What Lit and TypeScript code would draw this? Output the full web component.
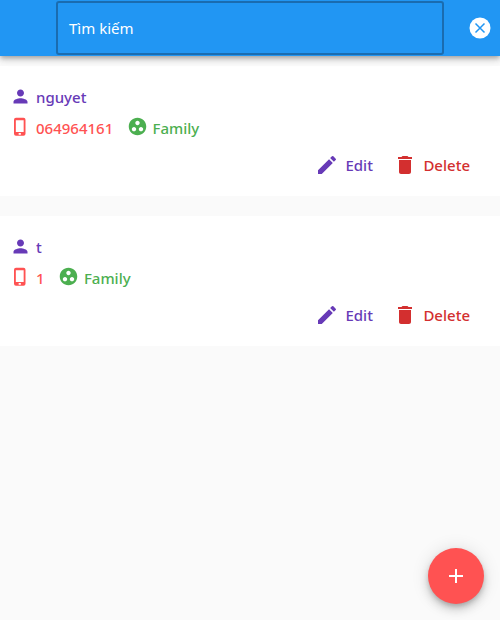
import { LitElement, html, css, svg } from "lit";
import { customElement, property } from "lit/decorators.js";

const ICONS: Record<string, string> = {
  person: "M12 12c2.21 0 4-1.79 4-4s-1.79-4-4-4-4 1.79-4 4 1.79 4 4 4zm0 2c-2.67 0-8 1.34-8 4v2h16v-2c0-2.66-5.33-4-8-4z",
  phone: "M16.2 1H7.2A2.4 2.4 0 0 0 4.8 3.4v16.8A2.4 2.4 0 0 0 7.2 22.6h9A2.4 2.4 0 0 0 18.6 20.2V3.4A2.4 2.4 0 0 0 16.2 1zM13 21.3h-2.6v-2H13v2zM16.4 18H7V4h9.4v14z",
  group: "M12 2C6.48 2 2 6.48 2 12s4.48 10 10 10 10-4.48 10-10S17.52 2 12 2zM8 17.5c-1.38 0-2.5-1.12-2.5-2.5s1.12-2.5 2.5-2.5 2.5 1.12 2.5 2.5-1.12 2.5-2.5 2.5zM9.5 8c0-1.38 1.12-2.5 2.5-2.5s2.5 1.12 2.5 2.5-1.12 2.5-2.5 2.5S9.5 9.38 9.5 8zm6.5 9.5c-1.38 0-2.5-1.12-2.5-2.5s1.12-2.5 2.5-2.5 2.5 1.12 2.5 2.5-1.12 2.5-2.5 2.5z",
  edit: "M3 17.25V21h3.75L17.81 9.94l-3.75-3.75L3 17.25zM20.71 7.04a1 1 0 0 0 0-1.41l-2.34-2.34a1 1 0 0 0-1.41 0l-1.83 1.83 3.75 3.75 1.83-1.83z",
  trash: "M6 19c0 1.1.9 2 2 2h8c1.1 0 2-.9 2-2V7H6v12zM19 4h-3.5l-1-1h-5l-1 1H5v2h14V4z",
  add: "M19 13h-6v6h-2v-6H5v-2h6V5h2v6h6v2z",
};

const icon = (name: string) => html`<svg class="icon ${name}" viewBox="0 0 24 24">${svg`<path fill-rule="evenodd" d=${ICONS[name]} />`}</svg>`;

@customElement("contact-card")
class ContactCard extends LitElement {
  @property() name = "";
  @property() phone = "";
  @property() group = "";

  static styles = css`
    :host { display: block; box-sizing: border-box; height: 130px; padding: 15px 30px 0 10px; background: #fff; }
    .row { display: flex; align-items: center; height: 31px; }
    .item { display: flex; align-items: center; gap: 6px; }
    .icon { display: block; flex: none; width: 20px; height: 20px; fill: currentColor; }
    .person { width: 21px; height: 21px; margin: 0 -1px 1px 0; }
    .phone { margin-bottom: 1px; }
    .group { width: 21px; height: 21px; margin-bottom: 2px; }
    .violet { color: #673ab7; }
    .coral { color: #ff5252; margin-right: 13.3px; }
    .green { color: #4caf50; gap: 5px; }
    .red { color: #d32f2f; }
    .actions { height: 43px; justify-content: flex-end; gap: 20.5px; }
    .actions .icon { width: 24px; height: 24px; }
  `;

  render() {
    return html`
      <div class="row"><div class="item violet">${icon("person")}<span>${this.name}</span></div></div>
      <div class="row">
        <div class="item coral">${icon("phone")}<span>${this.phone}</span></div>
        <div class="item green">${icon("group")}<span>${this.group}</span></div>
      </div>
      <div class="row actions">
        <div class="item violet">${icon("edit")}<span>Edit</span></div>
        <div class="item red">${icon("trash")}<span>Delete</span></div>
      </div>`;
  }
}

@customElement("app-root")
class AppRoot extends LitElement {
  static styles = css`
    :host { display: flex; flex-direction: column; height: 620px; background: #fafafa; position: relative; overflow: hidden;
      font: 500 15px/20px "Noto Sans", "Open Sans", sans-serif; }
    header { display: flex; flex: none; height: 56px; box-sizing: border-box; padding: 1px 9px 1px 56px; background: #2196f3;
      justify-content: space-between; align-items: center; position: relative; z-index: 1;
      box-shadow: 0 2px 4px -1px rgba(0,0,0,.2), 0 4px 5px rgba(0,0,0,.14), 0 1px 10px rgba(0,0,0,.12); }
    .search { box-sizing: border-box; width: 388px; height: 54px; padding: 0 11px; border: 2px solid #1a6cb0; border-radius: 3px;
      display: flex; align-items: center; color: #fff; font-weight: 400; font-size: 15px; }
    .clear { width: 22px; height: 22px; }
    main { display: flex; flex-direction: column; gap: 20px; padding-top: 10px; }
    .fab { position: absolute; right: 16px; bottom: 16px; width: 56px; height: 56px; border-radius: 50%; background: #ff5252;
      display: flex; align-items: center; justify-content: center;
      box-shadow: 0 3px 5px -1px rgba(0,0,0,.2), 0 6px 10px rgba(0,0,0,.14), 0 1px 18px rgba(0,0,0,.12); }
    .fab .icon { width: 24px; height: 24px; fill: #fff; }
  `;

  render() {
    return html`
      <header>
        <div class="search">Tìm kiếm</div>
        <svg class="clear" viewBox="0 0 22 22"><circle cx="11" cy="11" r="10.5" fill="#fff" /><path d="M6.5 6.5l9 9m0-9l-9 9" stroke="#2196f3" stroke-width="1.5" /></svg>
      </header>
      <main>
        <contact-card name="nguyet" phone="064964161" group="Family"></contact-card>
        <contact-card name="t" phone="1" group="Family"></contact-card>
      </main>
      <div class="fab">${icon("add")}</div>`;
  }
}
